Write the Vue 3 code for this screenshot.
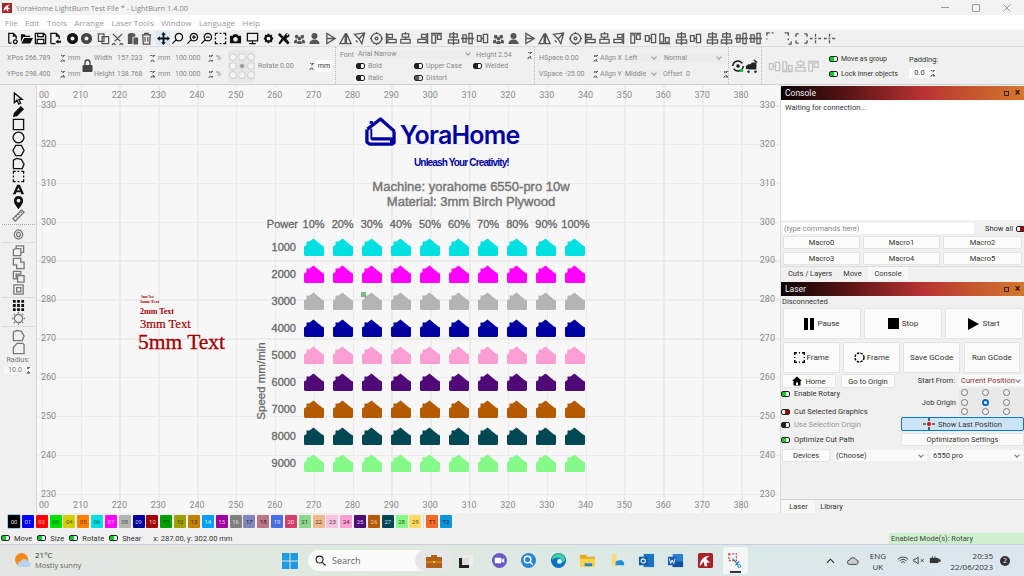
<script setup>
const icons = {
  nuevo: { s: 'M3 12V1.5h5l3 3v3M8 1.5v3h3M3 12h3M10 8.5a2 2 0 1 0 .01 0' },
  abrir: { f: 'M1 2.5h4l1 1.5h5v1.5H3.5L1 11zM4.5 6.5H14l-3 6H1.5z' },
  guardar: { s: 'M1.5 1.5h9l2 2v9h-11zM4 1.5V5h6V1.5M3.5 12.5V8h7v4.5' },
  exportar: { s: 'M2 12.5v-11h6l3 3v3M2 12.5h5M8 1.5v3h3', f: 'M7 10.5 10 8v1.5h3v2h-3V13z' },
  disco: { f: 'M7 1a6 6 0 1 0 0 12A6 6 0 0 0 7 1zm0 3.8a2.2 2.2 0 1 1 0 4.4 2.2 2.2 0 0 1 0-4.4z' },
  copiar: { s: 'M1.5 2h6v8h-6zM5.5 5h7v7.5h-7z' },
  tijera: { s: 'M2 2l8 8M12 2 4 10M3 12.5a1.5 1.5 0 1 0 .01 0M11 12.5a1.5 1.5 0 1 0 .01 0' },
  pegar: { f: 'M2 2h2V1h4v1h2v3H7v8H2zM8 6h5v7.5H8z' },
  papelera: { s: 'M2 3h10M5 3V1.5h4V3M3 3l.5 10h7L11 3M5.5 5.5v5M8.5 5.5v5' },
  mover: { f: 'M7 0l2.5 3H8v3h3V4.5L14 7l-3 2.5V8H8v3h1.5L7 14l-2.5-3H6V8H3v1.5L0 7l3-2.5V6h3V3H4.5z' },
  lupa: { s: 'M8.5 1.5a4 4 0 1 0 .01 0M5.5 8.5l-4 4' },
  lupaMas: { s: 'M8.5 1.5a4 4 0 1 0 .01 0M5.5 8.5l-4 4M6.5 5.5h4M8.5 3.5v4' },
  lupaMenos: { s: 'M8.5 1.5a4 4 0 1 0 .01 0M5.5 8.5l-4 4M6.5 5.5h4' },
  marco: { s: 'M1.5 4V1.5H4M6 1.5h2M10 1.5h2.5V4M12.5 6v2M12.5 10v2.5H10M8 12.5H6M4 12.5H1.5V10M1.5 8V6' },
  camara: { f: 'M1 4h3l1-1.5h4L10 4h3v8H1zm6 1.5a2.5 2.5 0 1 0 .01 0z' },
  monitor: { s: 'M1.5 1.5h11v8h-11zM7 9.5V12M3.5 12.5h7' },
  engrane: { f: 'M6 2h2l.4 1.5 1.4-.8 1.4 1.4-.8 1.4L12 6v2l-1.5.4.8 1.4-1.4 1.4-1.4-.8L8 12H6l-.4-1.5-1.4.8-1.4-1.4.8-1.4L2 8V6l1.5-.4-.8-1.4 1.4-1.4 1.4.8zm1 3a2 2 0 1 0 .01 0z' },
  llave: { f: 'M1 3l2-2 4 4 2.5-3.5L12 1 10 3l1 1 2-2 .5 2.5L10 7l3.5 4.5-2 2L7 9l-4 4.5L1.5 12 5 7z' },
  grupo: { f: 'M4 3a2 2 0 1 1 0 4 2 2 0 0 1 0-4zM10 3a2 2 0 1 1 0 4 2 2 0 0 1 0-4zM7 5a2 2 0 1 1 0 4 2 2 0 0 1 0-4zM1 11c0-2 1-3 3-3l1 4H1zM13 11c0-2-1-3-3-3l-1 4h4zM4.5 13c0-2 1-3.5 2.5-3.5S9.5 11 9.5 13z' },
  persona: { f: 'M7 1a3 3 0 1 1 0 6.5A3 3 0 0 1 7 1zM1.5 13c0-3 2.5-5 5.5-5s5.5 2 5.5 5z' },
  espejoV: { s: 'M2 1.5v11L11 7zM2 7h9' },
  espejoH: { s: 'M7 1.5 1 12.5h5.5zM8 1.5l5 11H8z' },
  avion: { s: 'M1.5 2.5l11-1.5-3 11.5-3-5zM6.5 7.5l6-6.5M3 9l2 2' },
  diana: { s: 'M7 1.5a5.5 5.5 0 1 0 .01 0M7 5.5a1.5 1.5 0 1 0 .01 0M7 0v2M7 12v2M0 7h2M12 7h2' },
  alinIzq: { s: 'M1.5 1v12M3 2.5h5V6H3zM3 8h9v3.5H3z' },
  alinCen: { s: 'M3.5 2h7v3.5h-7zM2 8h10v4H2zM7 0v2M7 5.5V8' },
  alinDer: { s: 'M12.5 1v12M6 2.5h5V6H6zM2 8h9v3.5H2z' },
  alinSup: { s: 'M1 1.5h12M2 3h4v9H2zM8 3h4v5H8z' },
  alinMed: { s: 'M1.5 4h4v6h-4zM8 2.5h4.5v9H8zM5.5 7H8' },
  alinInf: { s: 'M1 12.5h12M2 2h4v9H2zM8 6h4v5H8z' },
  horiz: { s: 'M3 2h8v3.5H3zM1.5 8.5h11V12h-11zM7 0v14' },
  vert: { s: 'M2 3h3.5v8H2zM8.5 1.5H12v11H8.5zM0 7h14' },
  puntos: { s: 'M1 2h3M1 2v3M10 2h3M13 2v3M1 12h3M1 12V9M10 12h3M13 12V9' },
  esq: { s: 'M1 4V1h3M6 1h2M1 7v1' },
  esq2: { s: 'M5 1h4v3M9 7v2M12 10v3H9' },
  cruz: { s: 'M1 7h3M6 7h2M10 7h3M7 2v3M7 9v3' },
  flecha: { s: 'M2.5 1v10.5l2.8-2.700 2 4.200 2-.9-2-4.100H11z' },
  lapiz: { f: 'M9.5 1 13 4.5 5.5 12 1 13l1-4.500z' },
  rect: { s: 'M1.5 1.5h11v11h-11z' },
  circulo: { s: 'M7 1.2a5.8 5.8 0 1 0 .01 0' },
  hexa: { s: 'M4 1.5h6L13 7l-3 5.5H4L1 7z' },
  nodo: { s: 'M1.5 12.5v-9L5 1.5l5 1 3 5-2 5z' },
  letra: { f: 'M5.5 2h3L13 12h-3l-.7-2H4.7L4 12H1zM7 4.8 5.5 8h3z' },
  pin: { f: 'M7 0a5 5 0 0 1 5 5c0 3.5-5 9-5 9S2 8.5 2 5a5 5 0 0 1 5-5zm0 3a2 2 0 1 0 .01 0z' },
  regla: { s: 'M1 10.5 10.5 1 13 3.5 3.5 13zM4 7.5 5.5 9M6.5 5 8 6.5M9 2.5 10.5 4' },
  anillo: { s: 'M7 2a4.5 5 0 1 0 .01 0M7 4.5a2 2.5 0 1 0 .01 0' },
  soldar: { s: 'M1.5 6l3-1V2h8v7h-3v3.5h-8zM5 5h4.5v4' },
  union: { s: 'M1.5 1.5h8v4H13v7H5v-4H1.5z' },
  resta: { s: 'M1.5 1.5h8v3h-5v5h-3zM6 6h7v7H6z' },
  inter: { s: 'M2 2h10v10H2zM5 5h4.5v4.5H5z' },
  malla: { f: 'M1 1h3v3H1zM5.5 1h3v3h-3zM10 1h3v3h-3zM1 5.5h3v3H1zM5.5 5.5h3v3h-3zM10 5.5h3v3h-3zM1 10h3v3H1zM5.5 10h3v3h-3zM10 10h3v3h-3z' },
  sol: { s: 'M7 2.5a4.5 4.5 0 1 0 .01 0M7 0v1.5M7 12.5V14M0 7h1.5M12.5 7H14M2 2l1 1M11 11l1 1M12 2l-1 1M3 11l-1 1' },
  redondeo: { s: 'M1.5 12.5v-9L5 1.5l5 1 3 5-2 5z' },
  chaflan: { s: 'M1.5 12.5V6l4-4.5h6L13 3v9.5z' }
};

const gruposBarra = [
  ['nuevo', 'abrir', 'guardar', 'exportar'],
  ['disco', 'disco'],
  ['copiar', 'tijera', 'pegar', 'papelera'],
  ['mover', 'lupa', 'lupaMas', 'lupaMenos', 'marco', 'camara'],
  ['monitor'],
  ['engrane', 'llave'],
  ['grupo', 'persona'],
  ['espejoV', 'espejoH', 'avion'],
  ['diana', 'alinIzq', 'alinCen'],
  ['alinDer', 'alinSup'],
  ['horiz', 'vert', 'alinMed'],
  ['grupo', 'persona'],
  ['espejoV', 'espejoH', 'avion'],
  ['diana', 'alinIzq', 'alinCen', 'alinDer'],
  ['alinSup', 'alinMed', 'alinInf'],
  ['horiz', 'alinMed'],
  ['horiz', 'horiz', 'vert', 'vert'],
  ['esq', 'esq2', 'puntos', 'cruz', 'cruz']
];

const gruposLado = [
  ['flecha', 'lapiz', 'rect', 'circulo', 'hexa', 'nodo', 'marco', 'letra', 'pin', 'regla'],
  ['anillo'],
  ['soldar', 'union', 'resta', 'inter'],
  ['malla', 'sol'],
  ['redondeo', 'chaflan']
];

const grisesLado = new Set(['anillo', 'soldar', 'union', 'resta', 'inter', 'sol', 'redondeo', 'chaflan', 'regla']);
const grisesBarra = new Set(['copiar', 'tijera', 'pegar', 'papelera']);

const menu = ['File', 'Edit', 'Tools', 'Arrange', 'Laser Tools', 'Window', 'Language', 'Help'];

const marcasX = Array.from({ length: 19 }, (_, i) => 200 + i * 10);
const marcasY = Array.from({ length: 11 }, (_, i) => 330 - i * 10);
const posX = v => 41.7 + ((v - 200) / 10) * 38.85 - 37 + 'px';
const posY = v => 106 + ((330 - v) / 10) * 38.85 - 86 + 'px';
// la regla empieza cortada: de 200 solo se ve "00"
const etiquetaX = v => (v === 200 ? '00' : v);
const centroX = v => (v === 200 ? '7px' : posX(v));

const potencias = ['10%', '20%', '30%', '40%', '50%', '60%', '70%', '80%', '90%', '100%'];
const filas = [
  { vel: 1000, color: '#00e0e0' },
  { vel: 2000, color: '#ff00ff' },
  { vel: 3000, color: '#b4b4b4' },
  { vel: 4000, color: '#0000a0' },
  { vel: 5000, color: '#fa9ed4' },
  { vel: 6000, color: '#500a78' },
  { vel: 7000, color: '#b45a00' },
  { vel: 8000, color: '#004754' },
  { vel: 9000, color: '#86fa88' }
];

const capas = [
  ['00', '#000000', '#ddd'], ['01', '#0000ff', '#ccd'], ['02', '#ff0000', '#fbb'], ['03', '#00e000', '#060'],
  ['04', '#d0d000', '#550'], ['05', '#ff8000', '#730'], ['06', '#00e0e0', '#066'], ['07', '#ff00ff', '#fcf'],
  ['08', '#b4b4b4', '#555'], ['09', '#0000a0', '#bbd'], ['10', '#a00000', '#ecc'], ['11', '#00a000', '#030'],
  ['12', '#a0a000', '#330'], ['13', '#c08000', '#430'], ['14', '#00a0ff', '#dff'], ['15', '#a000a0', '#ecd'],
  ['16', '#808080', '#ddd'], ['17', '#7d87b9', '#224'], ['18', '#bb7784', '#422'], ['19', '#4a6fe3', '#dde'],
  ['20', '#d33f6a', '#fdd'], ['21', '#8cd78c', '#242'], ['22', '#f0b98d', '#532'], ['23', '#f6c4e1', '#534'],
  ['24', '#fa9ed4', '#523'], ['25', '#500a78', '#dcd'], ['26', '#b45a00', '#ecb'], ['27', '#004754', '#cdd'],
  ['28', '#86fa88', '#252'], ['29', '#ffdb66', '#540'], ['T1', '#f36926', '#511'], ['T2', '#0c96d9', '#024']
];

const macros = ['Macro0', 'Macro1', 'Macro2', 'Macro3', 'Macro4', 'Macro5'];
const atajos = ['Move', 'Size', 'Rotate', 'Shear'];
const radios = [0, 1, 2, 3, 4, 5, 6, 7, 8];
const tenues = ['alinMed', 'alinInf', 'alinCen', 'alinSup'];
</script>

<template>
  <div class="ventana">
    <header class="titulo">
      <svg class="logo-lb" viewBox="0 0 12 12"><rect width="12" height="12" fill="#a8222a" /><path d="M2 10c0-5 3-8 8-8-2 1-3 2-3 3l3 2-3 .5L8 10H6L5 7z" fill="#fff" /></svg>
      <span>YoraHome LightBurn Test File * - LightBurn 1.4.00</span>
      <div class="controles">
        <span class="min"></span>
        <span class="rest"></span>
        <svg viewBox="0 0 8 8" width="8" height="8"><path d="M.5.5l7 7M7.5.5l-7 7" stroke="#999" fill="none" /></svg>
      </div>
    </header>

    <nav class="menu"><span v-for="m in menu" :key="m">{{ m }}</span></nav>

    <div class="barra">
      <div v-for="(g, i) in gruposBarra" :key="i" class="grupo">
        <span v-for="(k, j) in g" :key="j" class="ico" :class="{ activo: k === 'mover', gris: grisesBarra.has(k) || i > 5, medio: i === 1 && j === 1 }">
          <svg viewBox="0 0 14 14">
            <path v-if="icons[k].f" :d="icons[k].f" class="rel" />
            <path v-if="icons[k].s" :d="icons[k].s" class="lin" />
          </svg>
        </span>
      </div>
    </div>

    <div class="props">
      <section class="p-pos">
        <div class="p-col">
          <div class="fila"><span class="etq">XPos</span><span class="val">266.789</span><i class="spin"></i><span class="uni">mm</span></div>
          <div class="fila"><span class="etq">YPos</span><span class="val">298.400</span><i class="spin"></i><span class="uni">mm</span></div>
        </div>
        <svg class="candado" viewBox="0 0 10 14"><path d="M2.5 6V3.5a2.5 2.500 0 0 1 5 0V6" fill="none" stroke="#444" stroke-width="1.3" /><rect y="6" width="10" height="7" rx="1" fill="#444" /></svg>
        <div class="p-col">
          <div class="fila"><span class="etq e2">Width</span><span class="val v1">157.233</span><i class="spin"></i><span class="uni">mm</span><span class="val v2">100.000</span><i class="spin"></i><span class="uni uni-p">%</span></div>
          <div class="fila"><span class="etq e2">Height</span><span class="val v1">138.768</span><i class="spin"></i><span class="uni">mm</span><span class="val v2">100.000</span><i class="spin"></i><span class="uni uni-p">%</span></div>
        </div>
        <div class="nueve">
          <span v-for="r in radios" :key="r" :class="{ sel: r === 4 }"></span>
        </div>
        <div class="rotar"><span class="etq">Rotate</span><span class="val">0.00</span><i class="spin"></i><span class="btn-mm">mm</span></div>
      </section>

      <section class="p-fuente">
        <div class="fila fila-fuente">
          <span class="etq">Font</span>
          <span class="sel-f ancho-fuente">Arial Narrow<i class="chev"></i></span>
          <span class="etq">Height</span><span class="val alt">2.54</span><i class="spin"></i>
        </div>
        <div class="opciones">
          <label><i class="tog negro"></i>Bold</label>
          <label><i class="tog negro"></i>Upper Case</label>
          <label><i class="tog negro"></i>Welded</label>
          <label><i class="tog negro"></i>Italic</label>
          <label><i class="tog gris-t"></i>Distort</label>
        </div>
      </section>

      <section class="p-esp">
        <div class="fila"><span class="etq ee">HSpace</span><span class="val ve">0.00</span><i class="spin"></i><span class="etq ea">Align X</span><span class="sel-f as">Left<i class="chev"></i></span><span class="sel-f an">Normal<i class="chev"></i></span></div>
        <div class="fila"><span class="etq ee">VSpace</span><span class="val ve">-25.00</span><i class="spin"></i><span class="etq ea">Align Y</span><span class="sel-f as">Middle<i class="chev"></i></span><span class="etq of">Offset</span><span class="val">0</span><i class="spin sp-of"></i></div>
      </section>

      <section class="p-modo">
        <svg viewBox="0 0 16 16" width="14" height="14"><path d="M2 8a6 6 0 0 1 11-3M14 8a6 6 0 0 1-11 3" fill="none" stroke="#111" stroke-width="1.6" /><circle cx="8" cy="8" r="2" fill="#111" /><circle cx="12" cy="13" r="2" fill="#00d020" /></svg>
        <svg viewBox="0 0 16 16" width="14" height="14"><path d="M1 8l3-2h2l2-2h5v8H5L1 11zM4 13a1.5 1.5 0 1 0 .01 0M12 13a1.5 1.5 0 1 0 .01 0" fill="#222" /><path d="M10 1l4 3" stroke="#222" stroke-width="1.5" /></svg>
      </section>

      <section class="p-grupo">
        <div class="tenue">
          <svg v-for="k in tenues" :key="k" viewBox="0 0 14 14" width="13" height="13"><path :d="icons[k].s" class="lin" /></svg>
        </div>
        <div class="p-col col-op">
          <label class="op-oscura"><i class="tog verde"></i>Move as group</label>
          <label class="op-oscura"><i class="tog verde"></i>Lock inner objects</label>
        </div>
        <div class="relleno">
          <span>Padding:</span>
          <div class="num"><b>0.0</b><i class="spin spin-bord"></i></div>
        </div>
      </section>
    </div>

    <div class="centro">
      <aside class="herramientas">
        <div v-for="(g, i) in gruposLado" :key="i" class="h-grupo">
          <span v-for="k in g" :key="k" class="h-ico" :class="{ gris: grisesLado.has(k) }">
            <svg viewBox="0 0 14 14">
              <path v-if="icons[k].f" :d="icons[k].f" class="rel" />
              <path v-if="icons[k].s" :d="icons[k].s" class="lin" />
            </svg>
          </span>
          <div v-if="i === 4" class="radio-lado">
            <span>Radius:</span>
            <div class="radio-num">10.0<i class="spin"></i></div>
          </div>
        </div>
      </aside>

      <main class="lienzo">
        <template v-for="v in marcasX" :key="v">
          <i class="linea-v" :style="{ left: posX(v) }"></i>
          <span class="regla-x arriba" :style="{ left: centroX(v) }">{{ etiquetaX(v) }}</span>
          <span class="regla-x abajo" :style="{ left: centroX(v) }">{{ etiquetaX(v) }}</span>
        </template>
        <template v-for="v in marcasY" :key="v">
          <i class="linea-h" :style="{ top: posY(v) }"></i>
          <span class="regla-y izq" :style="{ top: posY(v) }">{{ v }}</span>
          <span class="regla-y der" :style="{ top: posY(v) }">{{ v }}</span>
        </template>

        <div class="marca">
          <svg viewBox="0 0 33 32" width="33" height="31"><path d="M3 12.5 16.5 2 31 15M7 7V4M2.5 13v13l3 2h23l2-1.500V15M7 22.5h21v5" fill="none" stroke="#0000a0" stroke-width="3.4" stroke-linejoin="round" /><path d="M7 12v11" stroke="#0000a0" stroke-width="2" /></svg>
          <span>YoraHome</span>
        </div>
        <div class="lema">Unleash Your Creativity!</div>
        <div class="maquina">Machine: yorahome 6550-pro 10w<br />Material: 3mm Birch Plywood</div>

        <div class="matriz">
          <span class="rot pow">Power</span>
          <span v-for="p in potencias" :key="p" class="rot">{{ p }}</span>
          <template v-for="f in filas" :key="f.vel">
            <span class="rot vel">{{ f.vel }}</span>
            <svg v-for="p in potencias" :key="p" class="casa" viewBox="0 0 20 18" :fill="f.color"><path d="M0 8.5 2.5 7V3.5h3L9.5.5 18 7.500l2 1V17l-1 1H1l-1-1z" /></svg>
          </template>
        </div>
        <span class="velocidad">Speed mm/min</span>
        <i class="selector"></i>

        <div class="muestra t1">1mm Text</div>
        <div class="muestra t2">1mm Text</div>
        <div class="muestra t3">2mm Text</div>
        <div class="muestra t4">3mm Text</div>
        <div class="muestra t5">5mm Text</div>
      </main>

      <aside class="panel">
        <div class="cab">Console<span class="cab-ico"><i class="flot"></i><b>×</b></span></div>
        <div class="salida">Waiting for connection...</div>
        <div class="comando"><span class="entrada">(type commands here)</span><span>Show all</span><i class="tog rojo"></i></div>
        <div class="macros"><button v-for="m in macros" :key="m">{{ m }}</button></div>
        <div class="pestanas"><span class="t-a">Cuts / Layers</span><span class="t-b">Move</span><span class="t-c act">Console</span></div>

        <div class="cab cab-laser">Laser<span class="cab-ico"><i class="flot"></i><b>×</b></span></div>
        <div class="estado">Disconnected</div>
        <div class="tres">
          <button><svg viewBox="0 0 10 12" width="10" height="12"><path d="M0 0h4v12H0zM6 0h4v12H6z" /></svg>Pause</button>
          <button><svg viewBox="0 0 11 11" width="11" height="11"><path d="M0 0h11v11H0z" /></svg>Stop</button>
          <button><svg viewBox="0 0 11 12" width="11" height="12"><path d="M0 0l11 6-11 6z" /></svg>Start</button>
        </div>
        <div class="cuatro">
          <button><svg viewBox="0 0 11 11" width="11" height="11"><path d="M.7 3V.7H3M5 .7h1M8 .7h2.3V3M10.3 5v1M10.3 8v2.3H8M6 10.3H5M3 10.3H.7V8M.7 6V5" fill="none" stroke="#000" stroke-width="1.4" /></svg>Frame</button>
          <button><svg viewBox="0 0 11 11" width="11" height="11"><circle cx="5.5" cy="5.5" r="4.5" fill="none" stroke="#000" stroke-width="1.4" stroke-dasharray="2.4 1.2" /></svg>Frame</button>
          <button>Save GCode</button>
          <button>Run GCode</button>
        </div>

        <div class="ajustes">
          <div class="izq-a">
            <div class="dos">
              <button><svg viewBox="0 0 10 10" width="10" height="10"><path d="M5 .5 0 5h1.5v4.5h7V5H10zM4 9V6.5h2V9z" /></svg>Home</button>
              <button>Go to Origin</button>
            </div>
            <label class="lin-op"><i class="tog verde"></i>Enable Rotary</label>
            <label class="lin-op sep-a"><i class="tog rojo"></i>Cut Selected Graphics</label>
            <label class="lin-op dim"><i class="tog negro"></i>Use Selection Origin</label>
            <label class="lin-op"><i class="tog verde"></i>Optimize Cut Path</label>
          </div>
          <div class="der-a">
            <div class="desde"><span>Start From:</span><span class="sel-p rojo-t">Current Position<i class="chev"></i></span></div>
            <div class="origen">
              <span>Job Origin</span>
              <div class="radios"><i v-for="r in radios" :key="r" :class="{ on: r === 4 }"></i></div>
            </div>
            <button class="ultima"><svg viewBox="0 0 12 12" width="12" height="12"><path d="M0 6h3M9 6h3M6 0v3M6 9v3" stroke="#000" stroke-width="1.2" /><circle cx="6" cy="6" r="2" fill="#e00" /></svg>Show Last Position</button>
            <button class="opti">Optimization Settings</button>
          </div>
        </div>

        <div class="equipos">
          <button>Devices</button>
          <span class="sel-p e1">(Choose)<i class="chev"></i></span>
          <span class="sel-p e2b">6550 pro<i class="chev"></i></span>
        </div>

        <div class="pestanas-b"><span class="act">Laser</span><span>Library</span></div>
      </aside>
    </div>

    <div class="paleta">
      <template v-for="c in capas" :key="c[0]">
        <i v-if="c[0] === 'T1'" class="sep-p"></i>
        <span class="capa" :class="{ primera: c[0] === '00' }" :style="{ background: c[1], color: c[2] }">{{ c[0] }}</span>
      </template>
    </div>

    <div class="estado-bar">
      <label v-for="a in atajos" :key="a"><i class="tog verde"></i>{{ a }}</label>
      <span class="coord">x: 287.00, y: 302.00 mm</span>
      <span class="modos">Enabled Mode(s): Rotary</span>
    </div>

    <footer class="tareas">
      <div class="clima">
        <svg viewBox="0 0 18 18" width="17" height="17"><circle cx="8" cy="8" r="7" fill="#f08a1c" /><path d="M7 16a3 3 0 0 1 0-6 4 4 0 0 1 7.5 0 3 3 0 0 1 .5 6z" fill="#b9d3ee" /></svg>
        <div><span class="temp">21°C</span><span class="cielo">Mostly sunny</span></div>
      </div>
      <div class="medio-t">
        <svg class="win" viewBox="0 0 16 16" width="16" height="16"><path d="M0 0h7.5v7.5H0zM8.5 0H16v7.5H8.5zM0 8.5h7.5V16H0zM8.5 8.5H16V16H8.5z" fill="#1e9be0" /></svg>
        <div class="buscar">
          <svg viewBox="0 0 12 12" width="11" height="11"><circle cx="5" cy="5" r="3.8" fill="none" stroke="#222" stroke-width="1.2" /><path d="M8 8l3.5 3.5" stroke="#222" stroke-width="1.3" /></svg>
          <span>Search</span>
          <em><svg viewBox="0 0 16 14" width="16" height="14"><path d="M5 3V1h6v2h5v11H0V3z" fill="#b0601a" /><path d="M0 8h16" stroke="#e59a30" /><rect x="7" y="7" width="2" height="2" fill="#fc0" /></svg></em>
        </div>
        <svg class="app vista" viewBox="0 0 14 14" width="14" height="14"><rect x="4" y="1" width="10" height="10" fill="#eee" /><rect y="4" width="10" height="10" fill="#222" /><rect x="3" y="4" width="7" height="7" fill="#ddd" /></svg>
        <svg class="app" viewBox="0 0 18 18"><circle cx="9" cy="9" r="8" fill="#6a5ac8" /><rect x="4" y="6" width="7" height="6" rx="1" fill="#fff" /><path d="M11.5 8 14 6.5v5L11.5 10z" fill="#fff" /></svg>
        <svg class="app" viewBox="0 0 18 18"><circle cx="9" cy="9" r="8" fill="#2a86d8" /><circle cx="8" cy="8" r="3.5" fill="none" stroke="#fff" stroke-width="1.5" /><path d="M10.5 10.5l3 3" stroke="#fff" stroke-width="1.5" /></svg>
        <svg class="app" viewBox="0 0 18 18"><circle cx="9" cy="9" r="8" fill="#0f6fc0" /><path d="M2 9a7 7 0 0 1 14-1c0 2-2 3-4 3 1-3-1-5-4-5-3 0-5 1-6 3z" fill="#3ed0a0" /><circle cx="10" cy="10" r="2.5" fill="#dff" /></svg>
        <svg class="app" viewBox="0 0 18 18"><path d="M1 3h6l2 2h8v3H1z" fill="#e6a91e" /><path d="M1 7h16v9H1z" fill="#fcd24c" /><rect x="6" y="12" width="8" height="3" fill="#1d7fd6" /></svg>
        <svg class="app" viewBox="0 0 18 18"><path d="M3 2h5v13H3z" fill="#fcd97a" /><path d="M7 12a3 3 0 0 1 3-3 4 4 0 0 1 6 3v2H7z" fill="#1f8fdc" /></svg>
        <svg class="app" viewBox="0 0 18 18"><rect x="6" y="2" width="11" height="14" fill="#1a73c4" /><rect x="1" y="5" width="9" height="9" fill="#0b5ba8" /><circle cx="5.5" cy="9.5" r="2.2" fill="none" stroke="#fff" stroke-width="1.2" /></svg>
        <svg class="app" viewBox="0 0 18 18"><rect x="6" y="2" width="11" height="14" rx="1" fill="#2f7fd0" /><path d="M6 10h11v6H6z" fill="#144f9e" /><rect x="1" y="5" width="9" height="9" fill="#1a5cb0" /><path d="M2.5 7 4 12l1.5-3.5L7 12l1.5-5" fill="none" stroke="#fff" /></svg>
        <svg class="app" viewBox="0 0 18 18"><rect x="1" y="1" width="16" height="16" rx="2" fill="#a8222a" /><path d="M3 15c0-6 4-11 11-11-3 1-4 3-4 4l4 3-4 .5L11 15H8L7 10z" fill="#fff" /></svg>
        <span class="recorte">
          <svg class="app" viewBox="0 0 18 18"><path d="M2 2h8v7H2z" fill="none" stroke="#d64040" stroke-dasharray="2 1.5" stroke-width="1.4" /><path d="M6 7l6 7M9 14l4-4" stroke="#2a86c8" stroke-width="1.3" /><circle cx="13" cy="15" r="1.6" fill="none" stroke="#2a86c8" /></svg>
          <i></i>
        </span>
      </div>
      <div class="bandeja">
        <svg viewBox="0 0 10 6" width="9" height="6"><path d="M1 5l4-4 4 4" fill="none" stroke="#222" stroke-width="1.2" /></svg>
        <svg class="nube" viewBox="0 0 14 9" width="12" height="8"><path d="M3 8.5a2.5 2.5 0 0 1 0-5 4 4 0 0 1 7.5-.5 2.8 2.8 0 0 1 .5 5.500z" fill="#ccc" stroke="#333" /></svg>
        <span class="idioma">ENG<br />UK</span>
        <svg viewBox="0 0 14 10" width="12" height="9"><path d="M1 3.5a8.5 8.5 0 0 1 12 0M3 5.5a5.5 5.5 0 0 1 8 0M5 7.5a2.5 2.5 0 0 1 4 0" fill="none" stroke="#222" /></svg>
        <svg viewBox="0 0 14 10" width="12" height="9"><path d="M1 3.5h2L6 1v8L3 6.5H1zM9 3.5l3.5 3M12.5 3.5 9 6.5" fill="none" stroke="#333" /></svg>
        <svg viewBox="0 0 14 10" width="12" height="9"><path d="M1 2h10v6H1z" fill="#333" /><path d="M11 4h2v2h-2M4 0v2M7 0v2" stroke="#333" /></svg>
        <span class="hora">20:35<br />22/06/2023</span>
        <span class="aviso">2</span>
      </div>
    </footer>
  </div>
</template>

<style scoped>
.ventana {
  width: 1024px;
  height: 576px;
  overflow: hidden;
  display: flex;
  flex-direction: column;
  background: #f0f0f0;
  font-family: Roboto, "Liberation Sans", sans-serif;
  font-size: 7px;
  color: #555;
}

i { display: inline-block; font-style: normal; }

.titulo {
  height: 15px;
  flex: none;
  display: flex;
  align-items: center;
  gap: 4px;
  padding-left: 2px;
  background: #f3f3f3;
  color: #888;
  font-size: 7.45px;
  font-family: "Open Sans", sans-serif;
}
.logo-lb { width: 10px; height: 10px; }
.controles {
  margin-left: auto;
  display: flex;
  align-items: center;
  gap: 23px;
  padding-right: 13px;
}
.min { width: 8px; height: 1px; background: #999; }
.rest { width: 6px; height: 6px; border: 1px solid #999; border-radius: 1px; }

.menu {
  height: 15px;
  flex: none;
  display: flex;
  align-items: center;
  gap: 7.5px;
  padding-left: 5px;
  background: #fff;
  color: #999;
  font-size: 8px;
  font-family: "Open Sans", sans-serif;
}

.barra {
  height: 16px;
  flex: none;
  display: flex;
  align-items: center;
  gap: 2.4px;
  padding-left: 5px;
}
.grupo { display: flex; }
.ico {
  width: 14.4px;
  height: 14px;
  display: flex;
  align-items: center;
  justify-content: center;
}
.ico svg { width: 13px; height: 13px; }
.ico.activo { background: #d6e8f7; }
.rel { fill: currentColor; fill-rule: evenodd; }
.lin { fill: none; stroke: currentColor; stroke-width: 1.4; }
.ico, .h-ico { color: #111; }
.ico.gris { color: #555; }
.ico.medio { color: #444; }

.props {
  height: 39px;
  flex: none;
  display: flex;
  border-top: 1px solid #dcdcdc;
  border-bottom: 1px solid #cfcfcf;
  box-sizing: border-box;
  color: #888;
}
.props section { box-sizing: border-box; height: 100%; display: flex; align-items: center; border-right: 1px dotted #bbb; padding-top: 1px; }
.p-pos { width: 336px; padding-left: 7px; }
.p-col { display: flex; flex-direction: column; gap: 7px; }
.fila { display: flex; align-items: center; height: 9px; white-space: nowrap; }
.etq { width: 18px; flex: none; }
.e2 { width: 23px; }
.val { width: 35px; flex: none; }
.v1 { width: 33px; }
.v2 { width: 33px; margin-left: 3px; }
.uni { width: 14px; flex: none; margin-left: 3px; }
.uni-p { width: 9px; }
.spin {
  width: 5px;
  height: 8px;
  flex: none;
  background:
    linear-gradient(45deg, transparent 50%, #666 50%) 0 1px / 2.5px 2.5px no-repeat,
    linear-gradient(-45deg, transparent 50%, #666 50%) 2.5px 1px / 2.5px 2.5px no-repeat,
    linear-gradient(135deg, transparent 50%, #666 50%) 0 5px / 2.5px 2.5px no-repeat,
    linear-gradient(-135deg, transparent 50%, #666 50%) 2.5px 5px / 2.5px 2.5px no-repeat;
}
.candado { width: 11px; height: 14px; margin: 0 1px 0 0; flex: none; }
.nueve {
  width: 27px;
  height: 33px;
  margin-left: 3px;
  flex: none;
  background: #e8e8e8;
  display: grid;
  grid-template-columns: repeat(3, 8px);
  grid-auto-rows: 8px;
  gap: 1px;
  place-content: center;
}
.nueve span { border: 1px solid #ccc; border-radius: 50%; box-sizing: border-box; background: #f4f4f4; }
.nueve .sel { background: #999; border: 2px solid #ddd; }
.rotar { display: flex; align-items: center; margin-left: 3px; }
.rotar .etq { width: 22px; }
.rotar .val { width: 29px; }
.btn-mm {
  margin-left: 2px;
  width: 16px;
  height: 12px;
  line-height: 12px;
  text-align: center;
  background: #fff;
  color: #333;
  border-radius: 1px;
}

.p-fuente { width: 199px; flex-direction: column; align-items: flex-start !important; padding: 3px 0 0 4px !important; }
.fila-fuente .etq { width: 16px; }
.fila-fuente .etq:nth-of-type(3) { width: 22px; }
.sel-f { position: relative; display: block; background: #ececec; height: 9px; line-height: 9px; padding-left: 2px; box-sizing: border-box; flex: none; }
.ancho-fuente { width: 119px; margin-right: 1px; }
.alt { width: 29px; }
.chev {
  position: absolute;
  right: 5px;
  top: 1px;
  width: 3px;
  height: 3px;
  border-right: 1px solid #999;
  border-bottom: 1px solid #999;
  transform: rotate(45deg);
}
.opciones {
  margin: 3px 0 0 16px;
  display: grid;
  grid-template-columns: 58px 59px auto;
  row-gap: 4px;
}
.opciones label { display: flex; align-items: center; gap: 3px; height: 8px; }
.tog {
  width: 9px;
  height: 6px;
  flex: none;
  box-sizing: border-box;
  border: 1px solid #222;
  border-radius: 2px;
  background: linear-gradient(90deg, #222 55%, #f4f4f4 55%);
}
.tog.verde { background: linear-gradient(90deg, #00d020 55%, #f4f4f4 55%); }
.tog.rojo { background: linear-gradient(90deg, #f4f4f4 45%, #a00000 45%); }
.tog.gris-t { background: linear-gradient(90deg, #555 55%, #ddd 55%); }

.p-esp { width: 194px; flex-direction: column; justify-content: center; gap: 7px; padding-left: 3px; }
.p-esp .fila { width: 100%; }
.ee { width: 26px; margin-left: 1px; }
.ve { width: 28px; }
.ea { width: 23px; margin-left: 2px; }
.as { width: 38px; }
.an { width: 64px; margin-left: 1px; }
.of { width: 23px; margin-left: 2px; }
.p-esp .val:not(.ve) { width: 29px; }
.sp-of { margin-left: 8px; }

.p-modo { width: 33px; justify-content: center; }

.p-grupo { border-right: none !important; padding-left: 6px; flex: 1; }
.tenue { width: 61px; display: flex; color: #c4c4c4; }
.col-op { width: 69px; }
.op-oscura { display: flex; align-items: center; gap: 3px; color: #333; height: 8px; white-space: nowrap; }
.relleno { margin-left: 11px; display: flex; flex-direction: column; gap: 4px; color: #333; font-size: 7.5px; }
.num { display: flex; align-items: center; width: 27px; height: 10px; background: #fff; }
.num b { flex: 1; font-weight: 400; text-align: center; }
.spin-bord { margin-right: 1px; }

.centro { flex: 1; min-height: 0; display: flex; }

.herramientas {
  width: 37px;
  flex: none;
  box-sizing: border-box;
  padding-top: 7px;
  border-right: 1px solid #d8d8d8;
  display: flex;
  flex-direction: column;
  align-items: center;
}
.h-grupo {
  width: 33px;
  display: flex;
  flex-direction: column;
  align-items: center;
  border-bottom: 1px solid #dcdcdc;
  padding-bottom: 1px;
  margin-bottom: 1px;
}
.h-grupo:last-child { border: none; margin-top: 1px; }
.h-grupo:first-child { border-bottom: 1px dotted #aaa; padding-bottom: 2px; margin-bottom: 3px; }
.h-ico { width: 14px; height: 13px; display: flex; align-items: center; justify-content: center; }
.h-ico svg { width: 13px; height: 13px; }
.h-ico.gris { color: #777; }
.radio-lado { display: flex; flex-direction: column; align-items: center; gap: 2px; color: #777; margin-top: 1px; }
.radio-num { display: flex; gap: 4px; align-items: center; background: #f7f7f7; padding: 0 1px 0 4px; }

.lienzo {
  flex: 1;
  position: relative;
  overflow: hidden;
  background: #f7f7f7;
  font-family: "Liberation Sans", sans-serif;
  color: #666;
}
.linea-v { position: absolute; top: 0; bottom: 0; width: 1.5px; background: #ececec; }
.linea-h { position: absolute; left: 0; right: 0; height: 1.5px; background: #ececec; }
.regla-x, .regla-y {
  position: absolute;
  font-family: Roboto, sans-serif;
  font-size: 9px;
  line-height: 10px;
  color: #8a8a8a;
}
.regla-x { transform: translateX(-50%); }
.arriba { top: 5px; }
.abajo { bottom: 3px; }
.regla-y { transform: translateY(-50%); }
.izq { left: 4px; }
.der { right: 5px; }

.marca {
  position: absolute;
  left: 327px;
  top: 32px;
  display: flex;
  align-items: flex-end;
  gap: 3px;
  color: #0000a0;
  font-family: Inter, sans-serif;
  font-size: 25px;
  font-weight: 600;
  line-height: 26px;
  letter-spacing: -.8px;
}
.lema {
  position: absolute;
  left: 377px;
  top: 72px;
  color: #0000a0;
  font-size: 10px;
  font-weight: 700;
  letter-spacing: -.85px;
  white-space: nowrap;
}
.maquina {
  position: absolute;
  left: 335px;
  top: 95px;
  width: 198px;
  text-align: center;
  font-size: 13px;
  line-height: 14.5px;
  color: #777;
  -webkit-text-stroke: .45px #777;
  white-space: nowrap;
}
.matriz {
  position: absolute;
  left: 222px;
  top: 130px;
  display: grid;
  grid-template-columns: 40px repeat(10, 29.1px);
  grid-template-rows: 18px repeat(9, 27px);
  align-items: center;
  justify-items: center;
}
.rot { font-size: 11px; color: #666; -webkit-text-stroke: .3px #666; white-space: nowrap; }
.pow { justify-self: end; margin-right: 1px; }
.vel { justify-self: end; margin-right: 3px; }
.casa { width: 20px; height: 18px; }
.velocidad {
  position: absolute;
  left: 224px;
  top: 290px;
  transform: translate(-50%, 0) rotate(-90deg);
  font-size: 11.5px;
  color: #666;
  white-space: nowrap;
  -webkit-text-stroke: .25px #666;
}
.selector { position: absolute; left: 324px; top: 207px; width: 5px; height: 5px; background: #6c6; border: 1px solid #8a8; box-sizing: border-box; }
.muestra {
  position: absolute;
  left: 103px;
  color: #a00000;
  font-family: "Liberation Serif", serif;
  white-space: nowrap;
  font-weight: 700;
}
.t1 { top: 210px; font-size: 3px; left: 104px; }
.t2 { top: 214px; font-size: 4.5px; }
.t3 { top: 222px; font-size: 8px; }
.t4 { top: 232px; font-size: 12.5px; font-weight: 400; -webkit-text-stroke: .2px #a00000; }
.t5 { top: 245px; left: 101px; font-size: 21.5px; font-weight: 400; -webkit-text-stroke: .3px #a00000; }

.panel { width: 244px; flex: none; display: flex; flex-direction: column; border-left: 1px solid #ddd; box-sizing: border-box; color: #333; padding-top: 1px; }
.cab {
  height: 14px;
  flex: none;
  display: flex;
  align-items: center;
  justify-content: space-between;
  padding: 0 4px;
  box-sizing: border-box;
  background: linear-gradient(90deg, #0a0303 0%, #5b1414 28%, #b83232 58%, #c4552e 78%, #d4772e 100%);
  color: #eee;
  font-size: 8.5px;
}
.cab-ico { display: flex; align-items: center; gap: 6px; }
.flot { width: 5px; height: 5px; border: 1px solid #402010; box-sizing: border-box; }
.cab-ico b { color: #301008; font-size: 10px; line-height: 10px; }
.salida { height: 120px; flex: none; background: #fff; padding: 3px 4px; box-sizing: border-box; color: #333; font-size: 7.5px; }
.comando { display: flex; align-items: center; gap: 3px; height: 13px; margin: 2px 1px 0 2px; font-size: 7.5px; white-space: nowrap; }
.entrada { width: 191px; flex: none; height: 11px; line-height: 11px; background: #fff; color: #888; margin-right: 8px; padding-left: 1px; box-sizing: border-box; }
.macros { display: grid; grid-template-columns: 77px 77px 79px; gap: 3px; padding: 1px 0 0 2px; }
button {
  font: inherit;
  color: #333;
  background: #fbfbfb;
  border: 1px solid #e4e4e4;
  border-radius: 1px;
  padding: 0;
  display: flex;
  align-items: center;
  justify-content: center;
  box-sizing: border-box;
  font-size: 7.5px;
  white-space: nowrap;
}
button svg { fill: #000; }
.macros button { height: 13px; }
.pestanas { display: flex; margin-top: 1px; height: 13px; padding-left: 2px; border-top: 1px solid #ddd; font-size: 7.5px; }
.pestanas span { display: flex; align-items: center; justify-content: center; }
.t-a { width: 54px; }
.t-b { width: 31px; }
.t-c { width: 40px; }
.pestanas .act { background: #f8f8f8; }
.cab-laser { margin-top: 2px; }
.estado { height: 11px; line-height: 11px; padding-left: 1px; font-size: 7.5px; }
.tres { display: grid; grid-template-columns: 78px 78px 78px; gap: 3px; padding: 1px 0 0 2px; }
.tres button { height: 31px; gap: 3px; font-size: 8px; }
.cuatro { display: grid; grid-template-columns: repeat(4, 56.5px); gap: 3.7px; padding: 3px 0 0 2px; }
.cuatro button { height: 31px; gap: 2px; font-size: 8px; }

.ajustes { display: flex; padding-top: 1px; height: 73px; }
.izq-a { width: 118px; display: flex; flex-direction: column; }
.dos { display: flex; gap: 5px; padding-left: 1px; }
.dos button { width: 54px; height: 14px; gap: 3px; }
.lin-op { display: flex; align-items: center; gap: 4px; height: 9px; font-size: 7.5px; margin-top: 2px; }
.lin-op:nth-child(2) { margin-top: 1px; }
.lin-op.sep-a { margin-top: 9px; }
.lin-op.dim { color: #999; margin-top: 4px; }
.izq-a .lin-op:last-child { margin-top: 6px; }
.der-a { flex: 1; display: flex; flex-direction: column; align-items: flex-end; }
.desde { display: flex; align-items: center; gap: 4px; height: 13px; font-size: 7.5px; }
.sel-p { position: relative; display: block; height: 11px; line-height: 11px; padding-left: 2px; box-sizing: border-box; background: #fafafa; font-size: 7.5px; flex: none; }
.desde .sel-p { width: 65px; }
.rojo-t { color: #8a3030; }
.sel-p .chev { top: 3px; right: 4px; border-color: #777; }
.origen { display: flex; align-items: center; gap: 3px; font-size: 7.5px; height: 28px; margin-top: 1px; }
.radios {
  width: 65px;
  height: 28px;
  box-sizing: border-box;
  padding-left: 2px;
  background: #e9e9e9;
  display: grid;
  grid-template-columns: repeat(3, 7px);
  grid-auto-rows: 7px;
  column-gap: 14px;
  row-gap: 2.5px;
  align-content: center;
}
.radios i { border: 1px solid #777; border-radius: 50%; box-sizing: border-box; background: #f4f4f4; }
.radios .on { border: 2px solid #0067c0; background: #fff; }
.ultima { width: 123px; height: 14px; margin-top: 1px; background: #cce4f7; border: 1px solid #0078d4; border-radius: 2px; gap: 3px; }
.opti { width: 123px; height: 13px; margin-top: 2px; }
.equipos { display: flex; gap: 4px; padding: 2px 0 0 1px; align-items: center; }
.equipos button { width: 48px; height: 13px; }
.e1 { width: 93px; }
.e2b { width: 92px; }
.pestanas-b { margin-top: auto; height: 13px; display: flex; padding-left: 1px; border-top: 1px solid #cfcfcf; font-size: 7.5px; }
.pestanas-b span { width: 33px; display: flex; align-items: center; justify-content: center; }
.pestanas-b .act { background: #f8f8f8; }

.paleta {
  height: 18px;
  flex: none;
  display: flex;
  align-items: center;
  padding: 0 0 2px 8px;
  gap: 1.85px;
  box-sizing: border-box;
}
.capa {
  width: 12px;
  height: 13px;
  flex: none;
  text-align: center;
  line-height: 13px;
  font-size: 6px;
  border-radius: 1px;
}
.primera { box-shadow: 0 0 0 1px #9cc8ec; }
.sep-p { width: 1px; height: 13px; background: #ddd; }

.estado-bar { height: 13px; flex: none; display: flex; align-items: center; color: #333; font-size: 7.5px; padding: 1px 0 0 1px; box-sizing: border-box; }
.estado-bar label { display: flex; align-items: center; gap: 4px; padding-right: 5px; }
.coord { margin-left: 7px; }
.modos { margin-left: auto; width: 135px; height: 11px; line-height: 11px; background: #cff0cf; padding-left: 2px; box-sizing: border-box; color: #444; }

.tareas {
  height: 32px;
  flex: none;
  display: flex;
  align-items: center;
  box-sizing: border-box;
  border-top: 1px solid #ccd;
  background: linear-gradient(90deg, #e4e6e2 0%, #dfe9de 35%, #dbe9e6 65%, #dce6ef 100%);
  font-family: "Open Sans", sans-serif;
  color: #333;
}
.clima { width: 282px; flex: none; display: flex; align-items: center; gap: 4px; padding-left: 14px; box-sizing: border-box; }
.clima div { display: flex; flex-direction: column; }
.temp { font-size: 8px; line-height: 10px; }
.cielo { font-size: 7.5px; line-height: 11px; color: #666; }
.medio-t { display: flex; align-items: center; }
.win { margin-right: 10px; }
.buscar {
  width: 144px;
  height: 21px;
  box-sizing: border-box;
  background: #fafafa;
  border-radius: 11px;
  display: flex;
  align-items: center;
  gap: 6px;
  padding-left: 7px;
  font-size: 9px;
  color: #666;
  position: relative;
  margin-right: 7px;
}
.buscar em {
  position: absolute;
  right: 0;
  top: 0;
  width: 37px;
  height: 21px;
  background: #e4e6e8;
  border-radius: 11px;
  display: flex;
  align-items: center;
  justify-content: center;
}
.app { width: 17px; height: 17px; margin-right: 12.4px; flex: none; }
.vista { width: 14px; height: 14px; margin-right: 18px; }
.recorte { position: relative; width: 25px; height: 27px; background: #f4f6f6; border-radius: 3px; margin-left: -3px; display: flex; align-items: center; justify-content: center; }
.recorte .app { margin: 0; }
.recorte i { position: absolute; bottom: 1px; left: 7px; width: 11px; height: 2px; background: #333; }
.bandeja { margin-left: auto; display: flex; align-items: center; gap: 4px; padding-right: 14px; }
.nube { margin-left: 7.5px; }
.idioma { font-size: 8px; line-height: 11px; text-align: center; margin: 0 7px; }
.hora { font-size: 8px; line-height: 11px; text-align: right; width: 46px; margin-left: 2px; }
.aviso { width: 10px; height: 10px; border-radius: 50%; background: #333; color: #fff; font-size: 6.5px; line-height: 10px; text-align: center; margin-left: 3px; }
</style>
